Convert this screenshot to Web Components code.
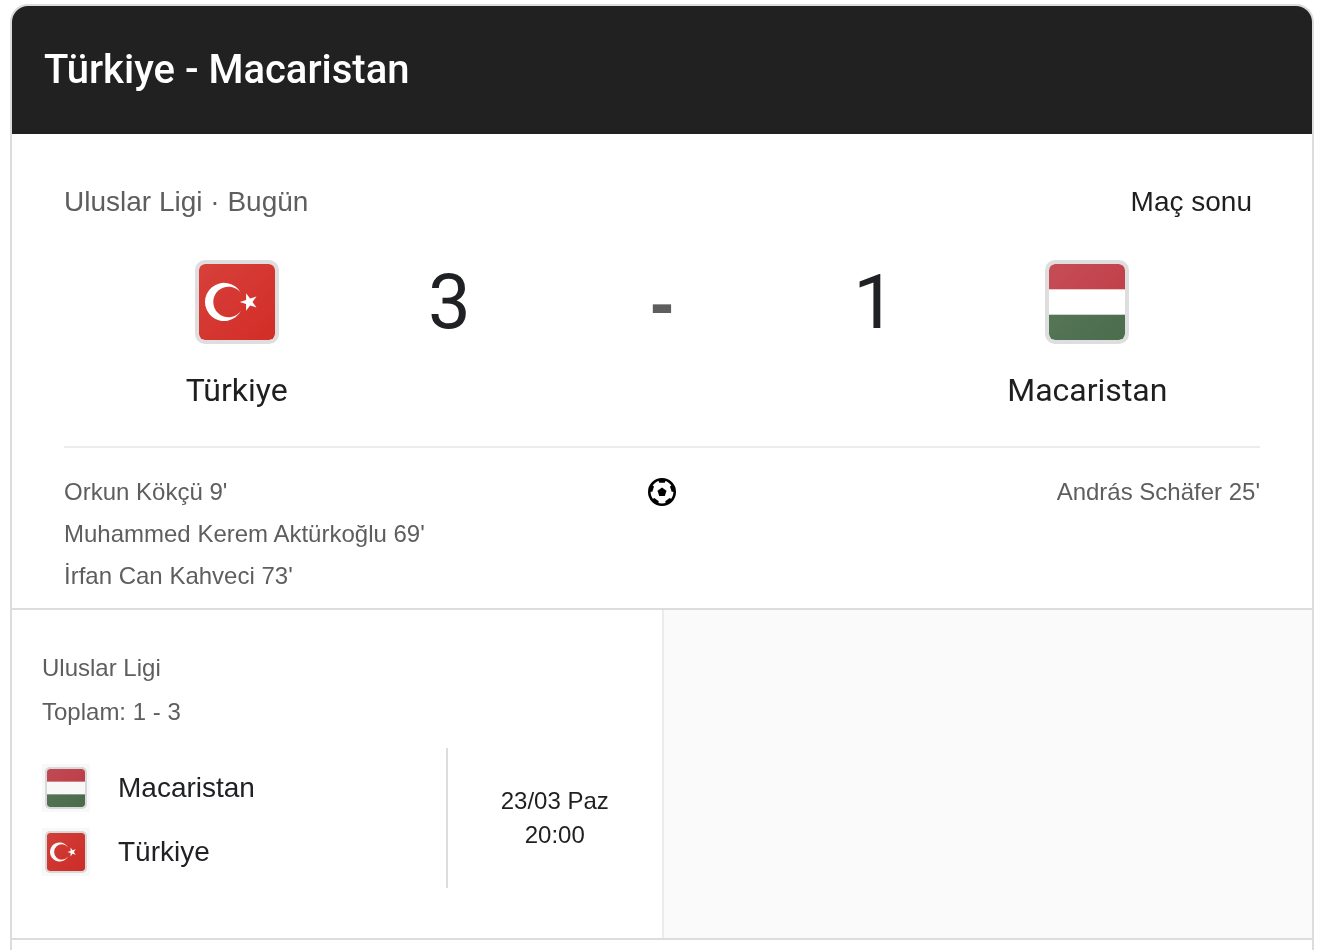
<!DOCTYPE html>
<html lang="tr">
<head>
<meta charset="utf-8">
<title>Türkiye - Macaristan</title>
<style>
    body {
        margin: 4px 10px 0;
        background-color: #fff;
        font-family: "Liberation Sans", Arial, sans-serif;
        color: #202124;
    }
</style>
</head>
<body>
<match-card>
    <span slot="title">Türkiye - Macaristan</span>
    <match-summary>
        <span slot="league">Uluslar Ligi · Bugün</span>
        <span slot="status">Maç sonu</span>
        <team-badge slot="home" country="tr">Türkiye</team-badge>
        <span slot="home-score">3</span>
        <span slot="away-score">1</span>
        <team-badge slot="away" country="hu">Macaristan</team-badge>
        <goal-list slot="goals">
            <span slot="home">Orkun Kökçü 9'</span>
            <span slot="home">Muhammed Kerem Aktürkoğlu 69'</span>
            <span slot="home">İrfan Can Kahveci 73'</span>
            <span slot="away">András Schäfer 25'</span>
        </goal-list>
    </match-summary>
    <match-series>
        <other-match>
            <span slot="league">Uluslar Ligi</span>
            <span slot="total">Toplam: 1 - 3</span>
            <team-row slot="team" country="hu">Macaristan</team-row>
            <team-row slot="team" country="tr">Türkiye</team-row>
            <span slot="date">23/03 Paz</span>
            <span slot="time">20:00</span>
        </other-match>
    </match-series>
</match-card>

<script>
const flags = {
    tr: `
        <rect width="76" height="76" fill="#d32d27"/>
        <path fill="#fff" fill-rule="evenodd" d="M41.9 28.9A19.1 19.1 0 1 0 41.9 47A15.3 15.3 0 1 1 41.9 28.9Z"/>
        <path fill="#fff" d="M40.7 38L47.1 35.9L47.1 29.2L51.1 34.6L57.5 32.5L53.5 38L57.5 43.5L51.1 41.4L47.1 46.8L47.1 40.1Z"/>`,
    hu: `
        <rect width="76" height="76" fill="#fff"/>
        <rect width="76" height="25.3" fill="#c03b45"/>
        <rect y="50.7" width="76" height="25.3" fill="#4b6d4c"/>`
};

// onCountry runs each time the country attribute is set
function define(name, html, onCountry) {
    const template = document.createElement('template');
    template.innerHTML = html;
    customElements.define(name, class extends HTMLElement {
        static get observedAttributes() {
            return ['country'];
        }

        constructor() {
            super();
            this.attachShadow({ mode: 'open' });
            this.shadowRoot.appendChild(template.content.cloneNode(true));
        }

        attributeChangedCallback(attr, oldValue, value) {
            if (onCountry) onCountry(this.shadowRoot, value);
        }
    });
}

define('country-flag', `
    <style>
        :host {
            display: block;
            box-sizing: border-box;
            width: var(--flag-size, 84px);
            height: var(--flag-size, 84px);
            border: var(--flag-border, 4px) solid #dedede;
            border-radius: var(--flag-radius, 10px);
            background-color: #dedede;
            overflow: hidden;
        }
        svg {
            display: block;
            width: 100%;
            height: 100%;
            border-radius: var(--flag-inner-radius, 6px);
        }
    </style>
    <svg viewBox="0 0 76 76" aria-hidden="true">
        <defs>
            <linearGradient id="shine" x1="0" y1="0" x2="1" y2="1">
                <stop offset="0" stop-color="#fff" stop-opacity=".09"/>
                <stop offset="1" stop-color="#fff" stop-opacity="0"/>
            </linearGradient>
        </defs>
        <g></g>
        <rect width="76" height="76" fill="url(#shine)"/>
    </svg>
`, (root, country) => {
    root.querySelector('g').innerHTML = flags[country];
});

define('team-badge', `
    <style>
        :host {
            display: flex;
            flex-direction: column;
            align-items: center;
            gap: 24px;
            font: 32px/44px Roboto, sans-serif;
            color: #1f1f1f;
        }
    </style>
    <country-flag></country-flag>
    <div><slot></slot></div>
`, (root, country) => {
    root.querySelector('country-flag').setAttribute('country', country);
});

define('team-row', `
    <style>
        :host {
            display: flex;
            align-items: center;
            gap: 28px;
            font-size: 28px;
            line-height: 48px;
        }
        .logo {
            --flag-size: 42px;
            --flag-border: 2px;
            --flag-radius: 5px;
            --flag-inner-radius: 3px;
            padding: 3px;
            background-color: #f8f8f8;
        }
        country-flag {
            mix-blend-mode: multiply;
        }
    </style>
    <div class="logo"><country-flag></country-flag></div>
    <div><slot></slot></div>
`, (root, country) => {
    root.querySelector('country-flag').setAttribute('country', country);
});

define('ball-icon', `
    <style>
        :host {
            display: block;
            width: 28px;
            height: 28px;
        }
        svg {
            display: block;
        }
    </style>
    <svg width="28" height="28" viewBox="0 0 28 28" role="img" aria-label="Gol">
        <circle cx="14" cy="14" r="12.7" fill="#fff" stroke="#000" stroke-width="2.6"/>
        <path d="M14 9.4L18.5 12.7L16.8 18H11.2L9.5 12.7Z"/>
        <path d="M10.3 2H17.7L16.8 4.7H11.2Z"/>
        <path d="M10.3 2H17.7L16.8 4.7H11.2Z" transform="rotate(72 14 14)"/>
        <path d="M10.3 2H17.7L16.8 4.7H11.2Z" transform="rotate(144 14 14)"/>
        <path d="M10.3 2H17.7L16.8 4.7H11.2Z" transform="rotate(216 14 14)"/>
        <path d="M10.3 2H17.7L16.8 4.7H11.2Z" transform="rotate(288 14 14)"/>
    </svg>
`);

define('goal-list', `
    <style>
        :host {
            display: grid;
            grid-template-columns: 1fr auto 1fr;
            font-size: 24px;
            line-height: 42px;
            color: #5e5e5e;
        }
        .side {
            display: flex;
            flex-direction: column;
        }
        .away {
            text-align: right;
        }
        ball-icon {
            margin-top: 7px;
        }
    </style>
    <div class="side"><slot name="home"></slot></div>
    <ball-icon></ball-icon>
    <div class="side away"><slot name="away"></slot></div>
`);

define('match-summary', `
    <style>
        :host {
            display: block;
            padding: 48px 52px 11px;
            border-bottom: 2px solid #dadce0;
        }
        .top {
            display: flex;
            justify-content: space-between;
            padding-right: 8px;
            font-size: 28px;
            line-height: 40px;
            color: #1f1f1f;
        }
        .league {
            color: #5e5e5e;
        }
        .board {
            display: grid;
            grid-template-columns: 1fr 80px 1fr 80px 1fr;
            padding: 38px 0 34px;
            border-bottom: 2px solid #ececec;
            margin-bottom: 23px;
        }
        .score {
            font: 76px/84px Roboto, sans-serif;
            text-align: center;
        }
        .dash {
            font: bold 72px/84px "Liberation Sans", Arial, sans-serif;
            text-align: center;
            color: #5e5e5e;
        }
    </style>
    <div class="top">
        <div class="league"><slot name="league"></slot></div>
        <div><slot name="status"></slot></div>
    </div>
    <div class="board">
        <slot name="home"></slot>
        <div class="score"><slot name="home-score"></slot></div>
        <div class="dash">-</div>
        <div class="score"><slot name="away-score"></slot></div>
        <slot name="away"></slot>
    </div>
    <slot name="goals"></slot>
`);

define('other-match', `
    <style>
        :host {
            display: block;
            padding: 36px 0 50px;
        }
        .info {
            display: flex;
            flex-direction: column;
            padding-left: 30px;
            margin-bottom: 14px;
            font-size: 24px;
            line-height: 44px;
            color: #5e5e5e;
        }
        .fixture {
            display: grid;
            grid-template-columns: 67fr 33fr;
        }
        .teams {
            display: flex;
            flex-direction: column;
            gap: 16px;
            padding: 16px 0 12px 30px;
            border-right: 2px solid #dadce0;
        }
        .when {
            display: flex;
            flex-direction: column;
            justify-content: center;
            text-align: center;
            font-size: 24px;
            line-height: 34px;
            color: #1f1f1f;
        }
    </style>
    <div class="info">
        <slot name="league"></slot>
        <slot name="total"></slot>
    </div>
    <div class="fixture">
        <div class="teams"><slot name="team"></slot></div>
        <div class="when">
            <slot name="date"></slot>
            <slot name="time"></slot>
        </div>
    </div>
`);

define('match-series', `
    <style>
        :host {
            display: grid;
            grid-template-columns: 1fr 1fr;
            border-bottom: 2px solid #dadce0;
        }
        .empty {
            background-color: #fafafa;
            border-left: 2px solid #ebebeb;
        }
    </style>
    <slot></slot>
    <div class="empty"></div>
`);

define('match-card', `
    <style>
        :host {
            display: block;
            border: 2px solid #dadce0;
            border-bottom: none;
            border-radius: 18px 18px 0 0;
            overflow: hidden;
            padding-bottom: 10px;
        }
        header {
            padding: 36px 32px;
            background-color: #212121;
            color: #fff;
        }
        h1 {
            margin: 0;
            font: 500 40px/56px Roboto, sans-serif;
        }
    </style>
    <header><h1><slot name="title"></slot></h1></header>
    <slot></slot>
`);
</script>
</body>
</html>
